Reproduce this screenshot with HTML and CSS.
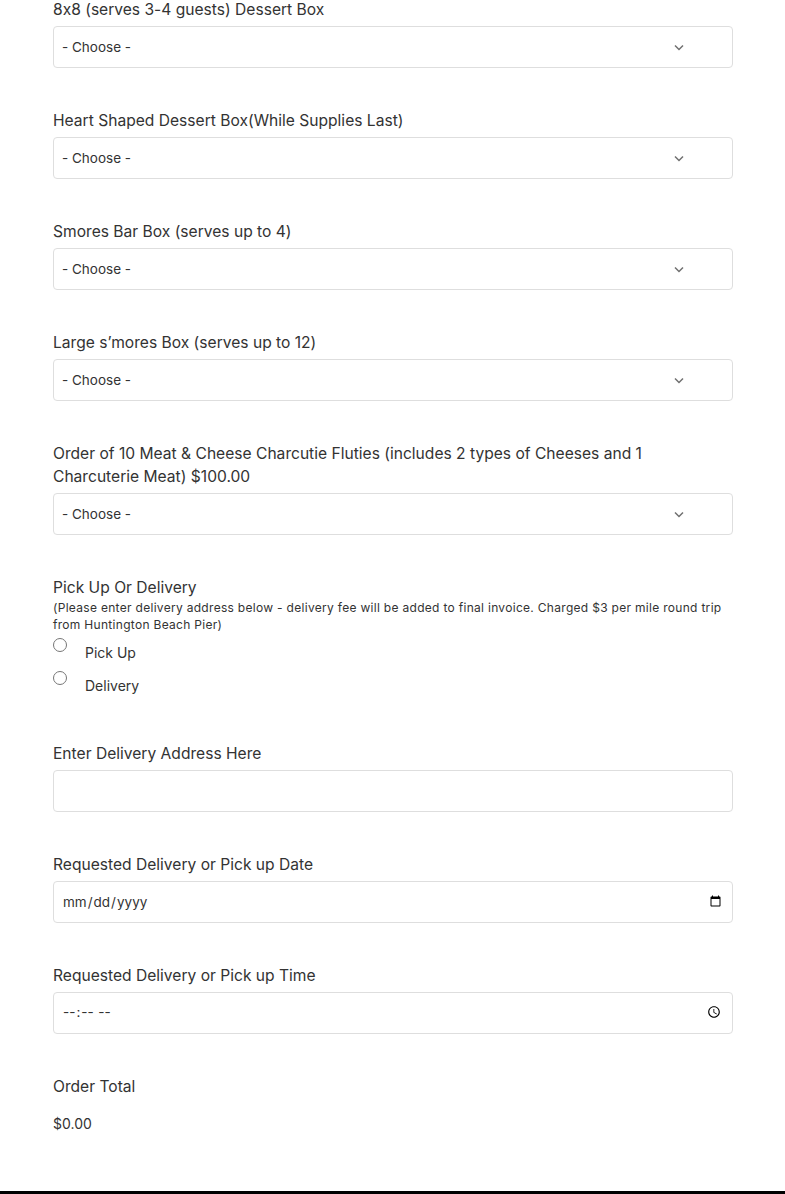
FILE: index.html
```html
<!DOCTYPE html>
<html lang="en">
<head>
<meta charset="utf-8">
<title>Order Form</title>
<link rel="stylesheet" href="styles.css">
</head>
<body>
<main class="page">
  <form class="form">
    <div class="field">
      <label class="label">8x8 (serves 3-4 guests) Dessert Box</label>
      <div class="select"><span>- Choose -</span><svg class="chev" width="10" height="7" viewBox="0 0 10 7"><path d="M1 1.5 L5 5.5 L9 1.5" fill="none" stroke="#707070" stroke-width="1.5"/></svg></div>
    </div>
    <div class="field">
      <label class="label">Heart Shaped Dessert Box(While Supplies Last)</label>
      <div class="select"><span>- Choose -</span><svg class="chev" width="10" height="7" viewBox="0 0 10 7"><path d="M1 1.5 L5 5.5 L9 1.5" fill="none" stroke="#707070" stroke-width="1.5"/></svg></div>
    </div>
    <div class="field">
      <label class="label">Smores Bar Box (serves up to 4)</label>
      <div class="select"><span>- Choose -</span><svg class="chev" width="10" height="7" viewBox="0 0 10 7"><path d="M1 1.5 L5 5.5 L9 1.5" fill="none" stroke="#707070" stroke-width="1.5"/></svg></div>
    </div>
    <div class="field">
      <label class="label">Large s’mores Box (serves up to 12)</label>
      <div class="select"><span>- Choose -</span><svg class="chev" width="10" height="7" viewBox="0 0 10 7"><path d="M1 1.5 L5 5.5 L9 1.5" fill="none" stroke="#707070" stroke-width="1.5"/></svg></div>
    </div>
    <div class="field">
      <label class="label label-wrap">Order of 10 Meat &amp; Cheese Charcutie Fluties (includes 2 types of Cheeses and 1 Charcuterie Meat) $100.00</label>
      <div class="select"><span>- Choose -</span><svg class="chev" width="10" height="7" viewBox="0 0 10 7"><path d="M1 1.5 L5 5.5 L9 1.5" fill="none" stroke="#707070" stroke-width="1.5"/></svg></div>
    </div>
    <div class="field field-radio">
      <div class="label label-tight">Pick Up Or Delivery</div>
      <div class="desc">(Please enter delivery address below - delivery fee will be added to final invoice. Charged $3 per mile round trip from Huntington Beach Pier)</div>
      <label class="radio"><input type="radio" name="pd"><span>Pick Up</span></label>
      <label class="radio"><input type="radio" name="pd"><span>Delivery</span></label>
    </div>
    <div class="field">
      <label class="label">Enter Delivery Address Here</label>
      <input class="input" type="text">
    </div>
    <div class="field">
      <label class="label">Requested Delivery or Pick up Date</label>
      <input class="input" type="date">
    </div>
    <div class="field">
      <label class="label">Requested Delivery or Pick up Time</label>
      <input class="input" type="time">
    </div>
    <div class="field total">
      <div class="label">Order Total</div>
      <div class="amount">$0.00</div>
    </div>
  </form>
</main>
<footer class="footbar"></footer>
</body>
</html>
```
FILE: styles.css
```css
html, body {
  margin: 0;
  padding: 0;
  background: #fff;
}
body {
  font-family: Inter, "Liberation Sans", Arial, sans-serif;
  font-feature-settings: "calt" 0;
  color: #333;
  height: 1194px;
  overflow: hidden;
  position: relative;
}
.page {
  padding: 0 52px 0 53px;
}
.form {
  display: flex;
  flex-direction: column;
  margin-top: -3px;
}
.field {
  display: flex;
  flex-direction: column;
  margin-bottom: 40px;
}
.label {
  font-size: 15.6px;
  line-height: 23px;
  color: #333;
  padding-top: 1px;
  margin-bottom: 5px;
}
.label-wrap {
  max-width: 660px;
}
.label-tight {
  margin-bottom: 0;
}
.select, .input {
  box-sizing: border-box;
  height: 42px;
  width: 680px;
  border: 1px solid #dedede;
  border-radius: 4px;
  background: #fff;
  font-family: Inter, "Liberation Sans", Arial, sans-serif;
  font-feature-settings: "calt" 0;
  font-size: 13.5px;
  color: #333;
}
.select {
  display: flex;
  align-items: center;
  justify-content: space-between;
  padding: 0 48px 0 8px;
}
.chev {
  display: block;
}
.input {
  padding: 0 8px;
  outline: none;
}
.desc {
  font-size: 12px;
  line-height: 17px;
  letter-spacing: 0.3px;
  color: #333;
  margin-bottom: 2px;
}
.field-radio {
  margin-bottom: 39.5px;
}
.radio {
  display: flex;
  align-items: flex-start;
  font-size: 14px;
  height: 33px;
}
.radio input {
  margin: 3px 0 0 0;
  width: 14px;
  height: 14px;
}
.radio span {
  margin-left: 18px;
  margin-top: 9px;
  line-height: 17px;
}
.total .label {
  margin-bottom: 17px;
}
.amount {
  font-size: 14px;
  line-height: 17px;
}
.footbar {
  position: absolute;
  left: 0;
  right: 0;
  bottom: 0;
  height: 3px;
  background: #000;
}
```
